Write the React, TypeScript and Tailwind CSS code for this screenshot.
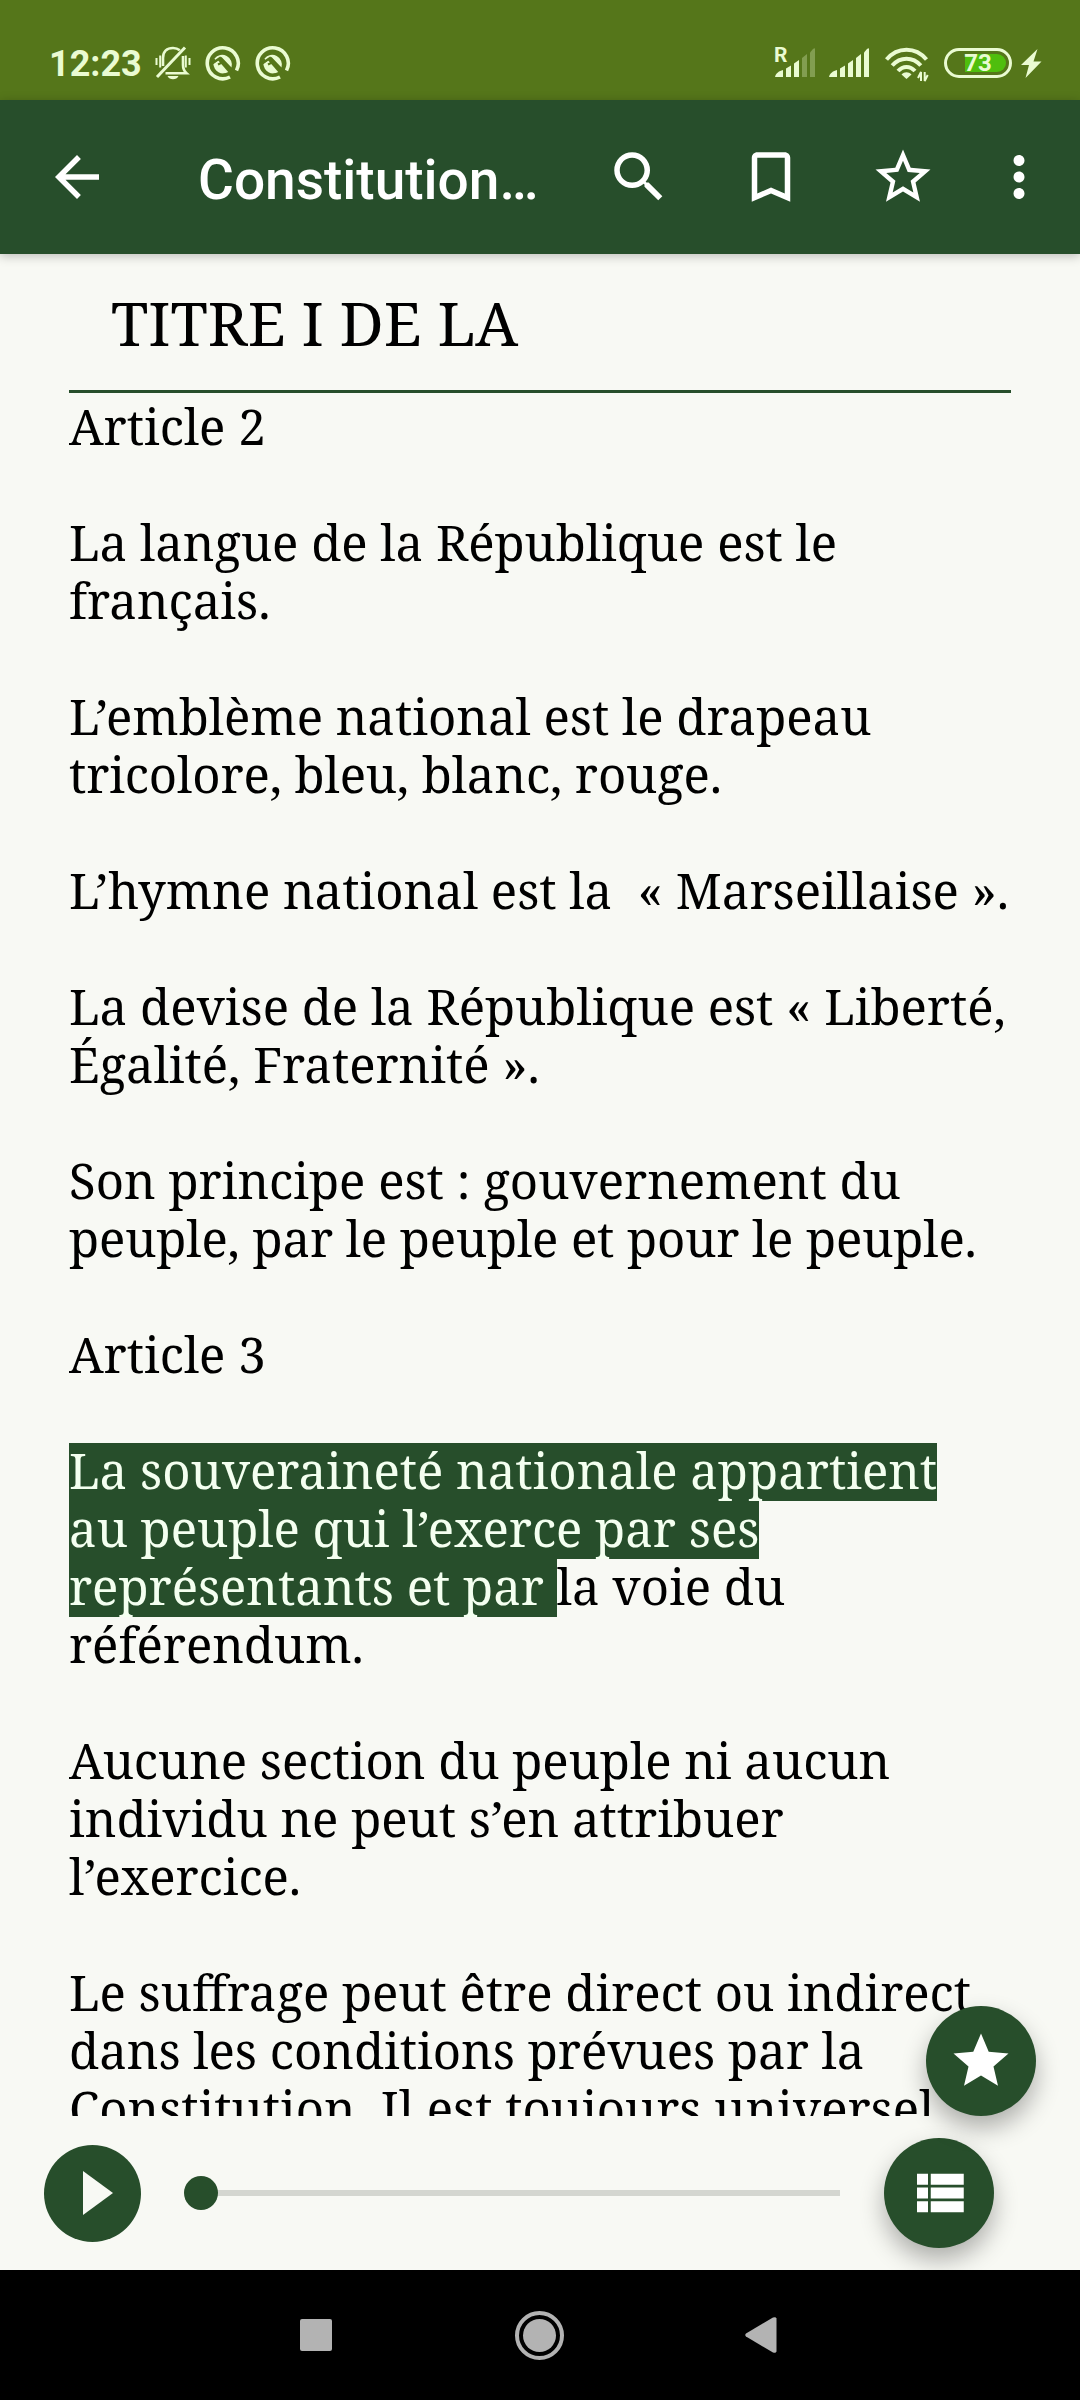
import { useState } from 'react';
import {
  MdArrowBack,
  MdBookmarkBorder,
  MdMoreVert,
  MdSearch,
  MdStar,
  MdStarBorder,
} from 'react-icons/md';

interface Paragraph {
  lines: string[];
  // Number of leading lines that are fully read by the speech highlight
  highlighted?: number;
  // Start of the next line that is also highlighted
  partial?: string;
}

const PARAGRAPHS: Paragraph[] = [
  { lines: ['Article 2'] },
  { lines: ['La langue de la République est le', 'français.'] },
  { lines: ['L’emblème national est le drapeau', 'tricolore, bleu, blanc, rouge.'] },
  { lines: ['L’hymne national est la\u00a0 « Marseillaise ».'] },
  { lines: ['La devise de la République est « Liberté,', 'Égalité, Fraternité ».'] },
  { lines: ['Son principe est : gouvernement du', 'peuple, par le peuple et pour le peuple.'] },
  { lines: ['Article 3'] },
  {
    lines: [
      'La souveraineté nationale appartient',
      'au peuple qui l’exerce par ses',
      'la voie du',
      'référendum.',
    ],
    highlighted: 2,
    partial: 'représentants et par ',
  },
  { lines: ['Aucune section du peuple ni aucun', 'individu ne peut s’en attribuer', 'l’exercice.'] },
  {
    lines: [
      'Le suffrage peut être direct ou indirect',
      'dans les conditions prévues par la',
      'Constitution. Il est toujours universel',
    ],
  },
];

function MutedBell() {
  return (
    <svg width="36" height="36" viewBox="0 0 36 36" fill="none" stroke="currentColor" strokeWidth="2.6">
      <path d="M8 21V13C8 6 12 3 18 3c3 0 5 .8 6.8 2.3M28 11v9c0 4 1 6 3.5 8.2H10.500" />
      <path d="M2 32L30 2.500" strokeWidth="3" />
      <path d="M1.500 13v7M5.200 10.500v12M30.800 10.500v12M34.500 13v7" strokeWidth="2" />
      <path d="M12.500 31h11c-1 2.200-3 3.200-5.500 3.200s-4.500-1-5.500-3.200z" fill="currentColor" stroke="none" />
    </svg>
  );
}

function RoundAppIcon() {
  return (
    <svg width="36" height="36" viewBox="0 0 36 36" fill="none">
      <path d="M25 32A15.500 15.500 0 1 1 31.500 25.500" stroke="currentColor" strokeWidth="3.600" />
      <path d="M9.500 13.500A9.800 9.800 0 0 1 26.500 22.500L16.500 12l-5.500 4.500z" fill="currentColor" />
      <path d="M8.400 19l4.800-3.500 10 11.500A9.800 9.800 0 0 1 8.400 19z" fill="currentColor" />
      <path d="M7.500 18l7.500-5 14.500 16" stroke="#55761a" strokeWidth="2.400" />
      <path d="M13 19.500l4-2" stroke="#55761a" strokeWidth="2" />
    </svg>
  );
}

function SignalBars({ level }: { level: number }) {
  const bars = [
    'M0 30C1 26 4 24 8 23v7z',
    'M11 21.500l5-3V30h-5z',
    'M19 16.500l5-3.500V30h-5z',
    'M27 11l5-4V30h-5z',
    'M35 5.500l3-3.500q2-1.500 2 0V30h-5z',
  ];
  return (
    <svg width="41" height="31" viewBox="0 0 41 31" fill="currentColor">
      {bars.map((d, i) => (
        <path key={d} d={d} opacity={i < level ? 1 : 0.3} />
      ))}
    </svg>
  );
}

function WifiIcon() {
  return (
    <svg width="44" height="35" viewBox="0 0 44 35" fill="none" stroke="currentColor" strokeWidth="4">
      <path d="M1.500 12.500C12.500-.5 30.500-.5 41.500 12.500" />
      <path d="M7.200 18.500c8-9 20.600-9 28.600 0" />
      <path d="M13 24c5-5.500 12-5.500 17 0" />
      <path d="M16.500 27.500c3-3 7-3 10 0L21.500 32z" fill="currentColor" stroke="none" />
      <path d="M36 34v-9l-3 6M39.700 25v9l3-6" strokeWidth="2" />
    </svg>
  );
}

function StatusBar() {
  return (
    <div className="flex h-[100px] items-start bg-[#55761a] pr-[38px] pl-[49px] font-[Roboto,sans-serif] text-[#eafbd2]">
      <span className="mt-[42px] w-[106px] text-[36px] leading-[44px] font-bold">12:23</span>
      <div className="mt-[45px] flex gap-[14px]">
        <MutedBell />
        <RoundAppIcon />
        <RoundAppIcon />
      </div>
      <div className="mt-[47px] ml-auto flex items-start">
        <div className="relative mr-[13px]">
          <SignalBars level={3} />
          <span className="absolute -top-[2px] -left-[1px] text-[21px] leading-[20px] font-bold">R</span>
        </div>
        <div className="mr-[15px]">
          <SignalBars level={5} />
        </div>
        <div className="mr-[15px]">
          <WifiIcon />
        </div>
        <div className="relative mt-px flex h-[30px] w-[68px] items-center justify-center overflow-hidden rounded-full border-[3px] border-current">
          <div className="absolute top-[3px] right-[3px] bottom-[3px] left-[18px] rounded-r-full bg-[#4fbe0d]" />
          <span className="relative text-[24px] leading-[24px] font-bold">73</span>
        </div>
        <svg className="mt-[2px] ml-[9px]" width="21" height="29" viewBox="0 0 21 29" fill="currentColor">
          <path d="M16.500 0L0 16h8L4.500 29 20.500 12.500h-8z" />
        </svg>
      </div>
    </div>
  );
}

function AppBar() {
  return (
    <header className="relative z-10 flex h-[154px] items-center bg-[#274e2b] pl-[44px] text-white shadow-[0_2px_10px_rgba(0,0,0,0.25)]">
      <button aria-label="Retour">
        <MdArrowBack className="size-[66px]" />
      </button>
      <h1 className="ml-[88px] w-[408px] pt-[6px] font-[Roboto,sans-serif] text-[55px] leading-[64px] font-medium whitespace-nowrap">
        Constitution…
      </h1>
      <button aria-label="Rechercher" className="mr-[66px]">
        <MdSearch className="size-[66px]" />
      </button>
      <button aria-label="Signet" className="mr-[66px]">
        <MdBookmarkBorder className="size-[66px]" />
      </button>
      <button aria-label="Favori" className="mr-[50px]">
        <MdStarBorder className="size-[66px]" />
      </button>
      <button aria-label="Plus">
        <MdMoreVert className="size-[66px]" />
      </button>
    </header>
  );
}

function Spoken({ text }: { text: string }) {
  return <mark className="inline-block h-[58px] bg-[#274e2b] leading-[54px] text-[#f4fff0]">{text}</mark>;
}

function ReaderParagraph({ lines, highlighted = 0, partial }: Paragraph) {
  return (
    <p className="mb-[58px] whitespace-pre">
      {lines.map((line, i) => (
        <span
          key={line}
          className={`block h-[58px] ${/^(peuple|tricolore),/.test(line) ? 'tracking-[-0.1px]' : ''}`}
        >
          {i < highlighted ? (
            <Spoken text={line} />
          ) : (
            <>
              {partial && i === highlighted && <Spoken text={partial} />}
              {line}
            </>
          )}
        </span>
      ))}
    </p>
  );
}

function Player() {
  const [position, setPosition] = useState(0);

  return (
    <div className="relative flex h-[154px] items-center pl-[44px]">
      <button
        aria-label="Lecture"
        onClick={() => setPosition(0)}
        className="flex size-[97px] items-center justify-center rounded-full bg-[#274e2b]"
      >
        <svg className="ml-[10px]" width="30" height="44" viewBox="0 0 30 44" fill="#f8f9f4">
          <path d="M0 0v44l30-22z" />
        </svg>
      </button>
      <div className="ml-[60px] flex w-[639px] items-center">
        <div className="relative h-[6px] w-full bg-[#d4d6d0]">
          <div
            className="absolute -top-[14px] -ml-[17px] size-[34px] rounded-full bg-[#274e2b]"
            style={{ left: `${position}%` }}
          />
        </div>
      </div>
      <button
        aria-label="Sommaire"
        className="ml-[44px] flex size-[110px] items-center justify-center rounded-full bg-[#274e2b] text-white shadow-[0_12px_24px_rgba(0,0,0,0.3)]"
      >
        <svg className="size-[66px]" viewBox="0 0 24 24" fill="currentColor">
          <path d="M4 14h4v-4H4v4zm0 5h4v-4H4v4zM4 9h4V5H4v4zm5 5h12v-4H9v4zm0 5h12v-4H9v4zM9 5v4h12V5H9z" />
        </svg>
      </button>
      {/* Floating favourite button */}
      <button
        aria-label="Ajouter aux favoris"
        className="absolute -top-[110px] left-[926px] flex size-[110px] items-center justify-center rounded-full bg-[#274e2b] text-white shadow-[0_12px_24px_rgba(0,0,0,0.3)]"
      >
        <MdStar className="size-[66px]" />
      </button>
    </div>
  );
}

function NavigationBar() {
  return (
    <nav className="relative flex h-[130px] items-center bg-black pl-[300px] text-[#b3b3b3]">
      <div className="size-[32px] rounded-[2px] bg-current" />
      <div className="ml-[183px] flex size-[49px] items-center justify-center rounded-full border-4 border-current">
        <div className="size-[33px] rounded-full bg-current" />
      </div>
      <svg className="ml-[181px]" width="32" height="36" viewBox="0 0 32 36" fill="currentColor">
        <path d="M1 16.500L28 .5q3-1 3.500 1v33q-.5 2-3.500 1L1 19.500q-1.500-1.500 0-3z" />
      </svg>
    </nav>
  );
}

export default function App() {
  return (
    <div className="flex h-[2400px] w-[1080px] flex-col overflow-hidden bg-[#f8f9f4]">
      <StatusBar />
      <AppBar />
      <main className="h-[1862px] overflow-hidden px-[69px] font-['Noto_Serif','DejaVu_Serif',serif] text-black">
        <h2 className="h-[139px] border-b-[3px] border-[#274e2b] pt-[28px] pl-[42px] text-[60.8px] leading-[82px]">
          TITRE I DE LA
        </h2>
        <div className="pt-[4px] text-[49.1px] leading-[58px]">
          {PARAGRAPHS.map((paragraph) => (
            <ReaderParagraph key={paragraph.lines[0]} {...paragraph} />
          ))}
        </div>
      </main>
      <Player />
      <NavigationBar />
    </div>
  );
}
